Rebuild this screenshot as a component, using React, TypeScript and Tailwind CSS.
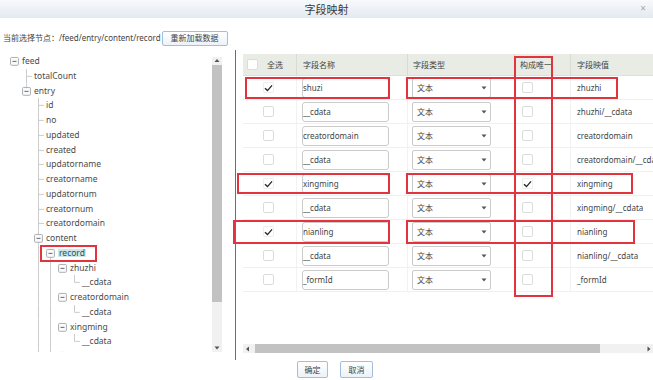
import React from "react";

type Seg = "none" | "line" | "join" | "end" | "minus" | "minusUp" | "minusDown" | "minusBoth";

type TreeNode = { segs: Seg[]; text: string; selected?: boolean };

const node = (segs: Seg[], text: string, selected = false): TreeNode => ({ segs, text, selected });

const LEAF2: Seg[] = ["none", "none", "join"];
const SUB: Seg[] = ["none", "none", "line", "line", "minus"];
const CDATA: Seg[] = ["none", "none", "line", "line", "none", "end"];

const TREE: TreeNode[] = [
  node(["minus"], "feed"),
  node(["none", "join"], "totalCount"),
  node(["none", "minusUp"], "entry"),
  ...["id", "no", "updated", "created", "updatorname", "creatorname", "updatornum", "creatornum", "creatordomain"].map((t) =>
    node(LEAF2, t),
  ),
  node(["none", "none", "minusBoth"], "content"),
  node(["none", "none", "line", "minusDown"], "record", true),
  node(SUB, "zhuzhi"),
  node(CDATA, "__cdata"),
  node(SUB, "creatordomain"),
  node(CDATA, "__cdata"),
  node(SUB, "xingming"),
  node(CDATA, "__cdata"),
  node(SUB, "nianling"),
];

const ROWS = [
  { name: "shuzi", map: "zhuzhi", ck: true },
  { name: "__cdata", map: "zhuzhi/__cdata" },
  { name: "creatordomain", map: "creatordomain" },
  { name: "__cdata", map: "creatordomain/__cdata" },
  { name: "xingming", map: "xingming", ck: true, uniq: true },
  { name: "__cdata", map: "xingming/__cdata" },
  { name: "nianling", map: "nianling", ck: true },
  { name: "__cdata", map: "nianling/__cdata" },
  { name: "_formId", map: "_formId" },
];

// red annotation boxes drawn over the screenshot
const MARKS = [
  "left-[40px] top-[245px] w-[57px] h-[17px]",
  "left-[245px] top-[77px] w-[145px] h-[22px]",
  "left-[406px] top-[77px] w-[212px] h-[22px]",
  "left-[237px] top-[173px] w-[153px] h-[21px]",
  "left-[406px] top-[173px] w-[227px] h-[21px]",
  "left-[233px] top-[220px] w-[157px] h-[24px]",
  "left-[406px] top-[220px] w-[229px] h-[24px]",
  "left-[514px] top-[56px] w-[39px] h-[241px]",
];

function TreeSeg({ kind }: { kind: Seg }) {
  const c = "#cbcbcb";
  const minus = kind.startsWith("minus");
  return (
    <svg width="12" height="15" viewBox="0 0 12 15" className="h-full shrink-0">
      {(kind === "line" || kind === "join") && <line x1="6.5" y1="0" x2="6.5" y2="15" stroke={c} />}
      {kind === "end" && <line x1="6.5" y1="0" x2="6.5" y2="7.5" stroke={c} />}
      {(kind === "join" || kind === "end") && <line x1="6.5" y1="7.5" x2="12" y2="7.5" stroke={c} />}
      {(kind === "minusUp" || kind === "minusBoth") && <line x1="6.5" y1="0" x2="6.5" y2="3.5" stroke={c} />}
      {(kind === "minusDown" || kind === "minusBoth") && <line x1="6.5" y1="11.5" x2="6.5" y2="15" stroke={c} />}
      {minus && (
        <>
          <rect x="2.5" y="3.5" width="8" height="8" rx="1" fill="#fafafa" stroke="#a9aeb3" />
          <line x1="4.5" y1="7.5" x2="8.5" y2="7.5" stroke="#666" />
        </>
      )}
    </svg>
  );
}

function Check({ checked, className = "" }: { checked?: boolean; className?: string }) {
  return (
    <span
      className={`flex h-[11px] w-[11px] shrink-0 items-center justify-center rounded-[2px] border border-[#dcdcdc] bg-white ${className}`}
    >
      {checked && (
        <svg width="9" height="8" viewBox="0 0 9 8">
          <path d="M1 4.2 L3.5 6.6 L8 1.4" fill="none" stroke="#2a2a2a" strokeWidth="1.4" />
        </svg>
      )}
    </span>
  );
}

function Tri({ dir }: { dir: "up" | "down" | "left" | "right" }) {
  const d = {
    up: "M0.5 4 L3 1 L5.5 4 Z",
    down: "M0.5 1.5 L3 4.5 L5.5 1.5 Z",
    left: "M4 0.5 L1 3 L4 5.5 Z",
    right: "M1.5 0.5 L4.5 3 L1.5 5.5 Z",
  }[dir];
  return (
    <svg width="6" height="6" viewBox="0 0 6 6">
      <path d={d} fill="#555" />
    </svg>
  );
}

function Btn({ children, className = "" }: { children: React.ReactNode; className?: string }) {
  return (
    <button
      type="button"
      className={`flex items-center justify-center rounded-[2px] border border-[#a3bddb] bg-linear-to-b from-white to-[#edf2f8] text-[8px] leading-none text-[#444] ${className}`}
    >
      {children}
    </button>
  );
}

export default function App() {
  return (
    <div className="relative h-[380px] w-[653px] overflow-hidden bg-white font-['Noto_Sans','Noto_Sans_CJK_SC',sans-serif] text-[#444]">
      {/* title bar */}
      <div className="relative flex h-[18px] items-center justify-center bg-linear-to-b from-[#f8fafc] to-[#e3e9f1] text-[11px] leading-none text-[#3a3a3a]">
        字段映射
        <span className="absolute right-[7px] top-[3px] text-[10px] leading-none text-[#a8a8a8]">×</span>
      </div>

      {/* current node */}
      <div className="flex h-[32px] items-center pl-[3px] pt-[8px] text-[8px] leading-none">
        <span>当前选择节点：/feed/entry/content/record</span>
        <Btn className="ml-[1px] h-[15px] w-[66px]">重新加载数据</Btn>
      </div>

      <div className="flex h-[310px]">
        {/* tree */}
        <div className="mt-[3px] flex h-[299px] w-[222px]">
          <div className="w-[212px] overflow-hidden pt-[1px] text-[8.5px] leading-none text-[#4a4a4a]">
            {TREE.map((n, i) => (
              <div key={i} className="flex h-[14.75px] items-center pl-[8px]">
                {n.segs.map((s, j) => (
                  <TreeSeg key={j} kind={s} />
                ))}
                <span className={`ml-[2px] whitespace-nowrap ${n.selected ? "bg-[#cfe8e4] px-px text-[#1f4f6e]" : ""}`}>
                  {n.text}
                </span>
              </div>
            ))}
          </div>
          <div className="mt-[4px] flex h-[295px] w-[10px] flex-col bg-[#f1f1f1]">
            <div className="flex h-[8px] items-center justify-center">
              <Tri dir="up" />
            </div>
            <div className="h-[237px] bg-[#c2c2c2]" />
            <div className="flex-1" />
            <div className="flex h-[8px] items-center justify-center">
              <Tri dir="down" />
            </div>
          </div>
        </div>

        <div className="ml-[13px] w-px bg-[#6e6e6e]" />

        {/* mapping grid */}
        <div className="ml-[7px] mt-[4px] flex h-[301px] w-[410px] flex-col overflow-hidden text-[8px] leading-none">
          <div className="flex h-[22px] shrink-0 border-b border-[#dde2d8] bg-[#e8ece4]">
            <div className="flex w-[17px] shrink-0 items-center pl-[4px]">
              <Check className="border-[#c6c6c6]" />
            </div>
            <div className="flex w-[37px] shrink-0 items-center border-r border-[#d8ddd3] pl-[7px]">全选</div>
            <div className="flex w-[111px] shrink-0 items-center border-r border-[#d8ddd3] pl-[6px]">字段名称</div>
            <div className="flex w-[107px] shrink-0 items-center border-r border-[#d8ddd3] pl-[5px]">字段类型</div>
            <div className="flex w-[56px] shrink-0 items-center border-r border-[#d8ddd3] pl-[5px]">构成唯一</div>
            <div className="flex w-[120px] shrink-0 items-center pl-[6px]">字段映值</div>
          </div>

          {ROWS.map((r, i) => (
            <div key={i} className="flex h-[24px] shrink-0 border-b border-[#f0f0f0]">
              <div className="w-[17px] shrink-0" />
              <div className="flex w-[37px] shrink-0 items-center border-r border-[#f2f2f2] pl-[3px]">
                <Check checked={r.ck} className={r.ck ? "border-[#eeeeee]" : ""} />
              </div>
              <div className="flex w-[111px] shrink-0 items-center border-r border-[#f2f2f2] pl-[5px]">
                <div className="flex h-[20px] w-[87px] items-center rounded-[3px] border border-[#cbcbcb] bg-white">
                  {r.name}
                </div>
              </div>
              <div className="flex w-[107px] shrink-0 items-center border-r border-[#f2f2f2] pl-[4px]">
                <div className="flex h-[20px] w-[79px] items-center justify-between rounded-[2px] border border-[#cbcbcb] bg-white pl-[4px] pr-[3px]">
                  <span>文本</span>
                  <Tri dir="down" />
                </div>
              </div>
              <div className="flex w-[56px] shrink-0 items-center border-r border-[#f2f2f2] pl-[7px]">
                <Check checked={r.uniq} className={r.uniq ? "border-[#eeeeee]" : ""} />
              </div>
              <div className="flex w-[120px] shrink-0 items-center whitespace-nowrap pl-[6px]">{r.map}</div>
            </div>
          ))}

          <div className="flex-1" />
          <div className="flex h-[9px] shrink-0 bg-[#f1f1f1]">
            <div className="flex w-[10px] items-center justify-center">
              <Tri dir="left" />
            </div>
            <div className="ml-[2px] w-[345px] bg-[#c2c2c2]" />
            <div className="flex-1" />
            <div className="flex w-[8px] items-center justify-center">
              <Tri dir="right" />
            </div>
          </div>
          <div className="h-[2px] shrink-0" />
        </div>
      </div>

      {/* footer buttons */}
      <div className="flex gap-[12px] pl-[297px] pt-px">
        <Btn className="h-[17px] w-[31px]">确定</Btn>
        <Btn className="h-[17px] w-[33px]">取消</Btn>
      </div>

      {MARKS.map((m, i) => (
        <div key={i} className={`pointer-events-none absolute border-2 border-[#e2343e] ${m}`} />
      ))}
    </div>
  );
}
